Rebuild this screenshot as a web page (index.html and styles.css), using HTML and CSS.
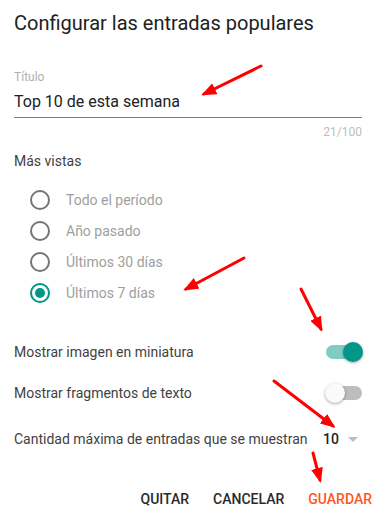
FILE: index.html
```html
<!DOCTYPE html>
<html lang="es">
<head>
  <meta charset="UTF-8">
  <title>Configurar las entradas populares</title>
  <link rel="stylesheet" href="styles.css">
</head>
<body>

  <div class="dialog">
    <h1 class="dialog-title">Configurar las entradas populares</h1>

    <!-- Title field -->
    <div class="field">
      <label class="field-label">Título</label>
      <div class="field-input">Top 10 de esta semana</div>
      <div class="field-counter">21/100</div>
    </div>

    <!-- Period -->
    <p class="section-label">Más vistas</p>
    <ul class="radio-list">
      <li class="radio-row"><span class="radio"></span>Todo el período</li>
      <li class="radio-row"><span class="radio"></span>Año pasado</li>
      <li class="radio-row"><span class="radio"></span>Últimos 30 días</li>
      <li class="radio-row"><span class="radio checked"></span>Últimos 7 días</li>
    </ul>

    <!-- Options -->
    <div class="option-row first">
      <span>Mostrar imagen en miniatura</span>
      <span class="switch on"><span class="knob"></span></span>
    </div>
    <div class="option-row">
      <span>Mostrar fragmentos de texto</span>
      <span class="switch"><span class="knob"></span></span>
    </div>
    <div class="option-row count-row">
      <span>Cantidad máxima de entradas que se muestran</span>
      <span class="select">10<span class="caret"></span></span>
    </div>

    <div class="actions">
      <button class="btn">Quitar</button>
      <button class="btn">Cancelar</button>
      <button class="btn primary">Guardar</button>
    </div>
  </div>

  <!-- Annotation arrows -->
  <svg class="arrows" width="385" height="513" viewBox="0 0 385 513">
    <defs>
      <marker id="head" markerWidth="5" markerHeight="4" refX="4" refY="2" orient="auto" markerUnits="strokeWidth">
        <path d="M0,0 L5,2 L0,4 Z" fill="#ff0000"/>
      </marker>
    </defs>
    <g stroke="#ff0000" stroke-width="3" stroke-linecap="round" marker-end="url(#head)">
      <line x1="261" y1="66" x2="204" y2="94"/>
      <line x1="244" y1="258" x2="186" y2="289"/>
      <line x1="301" y1="289" x2="321" y2="329"/>
      <line x1="274" y1="381" x2="333" y2="426"/>
      <line x1="313" y1="453" x2="320" y2="480"/>
    </g>
  </svg>

</body>
</html>
```

FILE: styles.css
```css
/* Reset */
* {
  margin: 0;
  padding: 0;
  box-sizing: border-box;
}

body {
  font-family: Roboto, "Liberation Sans", sans-serif;
  background-color: #fff;
  color: #212121;
  width: 385px;
  height: 513px;
  position: relative;
  overflow: hidden;
}

/* Dialog */
.dialog {
  padding: 11px 23px 0 14px;
}

.dialog-title {
  font-size: 20px;
  font-weight: 400;
  line-height: 24px;
  color: #212121;
}

/* Text field */
.field {
  margin-top: 34px;
}

.field-label {
  display: block;
  font-size: 12px;
  line-height: 16px;
  color: #b0b0b0;
}

.field-input {
  font-size: 16px;
  line-height: 20px;
  padding: 7px 0 5px;
  border-bottom: 1px solid #e8553a;
}

.field-counter {
  text-align: right;
  font-size: 12px;
  line-height: 16px;
  color: #bdbdbd;
  margin-top: 6px;
}

/* Radio group */
.section-label {
  font-size: 14px;
  line-height: 20px;
  color: #424242;
  margin-top: 11px;
}

.radio-list {
  list-style: none;
  margin-top: 13px;
  padding-left: 16px;
}

.radio-row {
  display: flex;
  align-items: center;
  height: 31px;
  font-size: 14px;
  color: #9e9e9e;
}

.radio {
  width: 20px;
  height: 20px;
  border: 2px solid #757575;
  border-radius: 50%;
  margin-right: 16px;
  position: relative;
}

.radio.checked {
  border-color: #009688;
}

.radio.checked::after {
  content: "";
  position: absolute;
  left: 3px;
  top: 3px;
  width: 10px;
  height: 10px;
  border-radius: 50%;
  background: #009688;
}

/* Option rows */
.option-row {
  display: flex;
  align-items: center;
  justify-content: space-between;
  height: 41px;
  font-size: 14px;
  color: #424242;
}

.option-row.first {
  margin-top: 23px;
}

.switch {
  width: 36px;
  height: 14px;
  border-radius: 7px;
  background: #bdbdbd;
  position: relative;
}

.switch .knob {
  position: absolute;
  top: -3px;
  left: -1px;
  width: 20px;
  height: 20px;
  border-radius: 50%;
  background: #fafafa;
  box-shadow: 0 1px 3px rgba(0, 0, 0, 0.35);
}

.switch.on {
  background: #80cbc4;
}

.switch.on .knob {
  left: auto;
  right: -1px;
  background: #009688;
}

.count-row {
  height: 48px;
  margin-top: 2px;
}

.select {
  display: flex;
  align-items: center;
  font-weight: 500;
  color: #212121;
  margin-right: 4px;
}

.caret {
  width: 0;
  height: 0;
  border-left: 5px solid transparent;
  border-right: 5px solid transparent;
  border-top: 5px solid #bdbdbd;
  margin-left: 9px;
}

/* Buttons */
.actions {
  display: flex;
  justify-content: flex-end;
  gap: 24px;
  margin-top: 26px;
  margin-right: -10px;
}

.btn {
  background: none;
  border: none;
  font-family: inherit;
  font-size: 14px;
  font-weight: 500;
  text-transform: uppercase;
  color: #2a2a2a;
  line-height: 20px;
  cursor: pointer;
}

.btn.primary {
  color: #ff5722;
}

/* Annotation overlay */
.arrows {
  position: absolute;
  left: 0;
  top: 0;
  pointer-events: none;
}
```
